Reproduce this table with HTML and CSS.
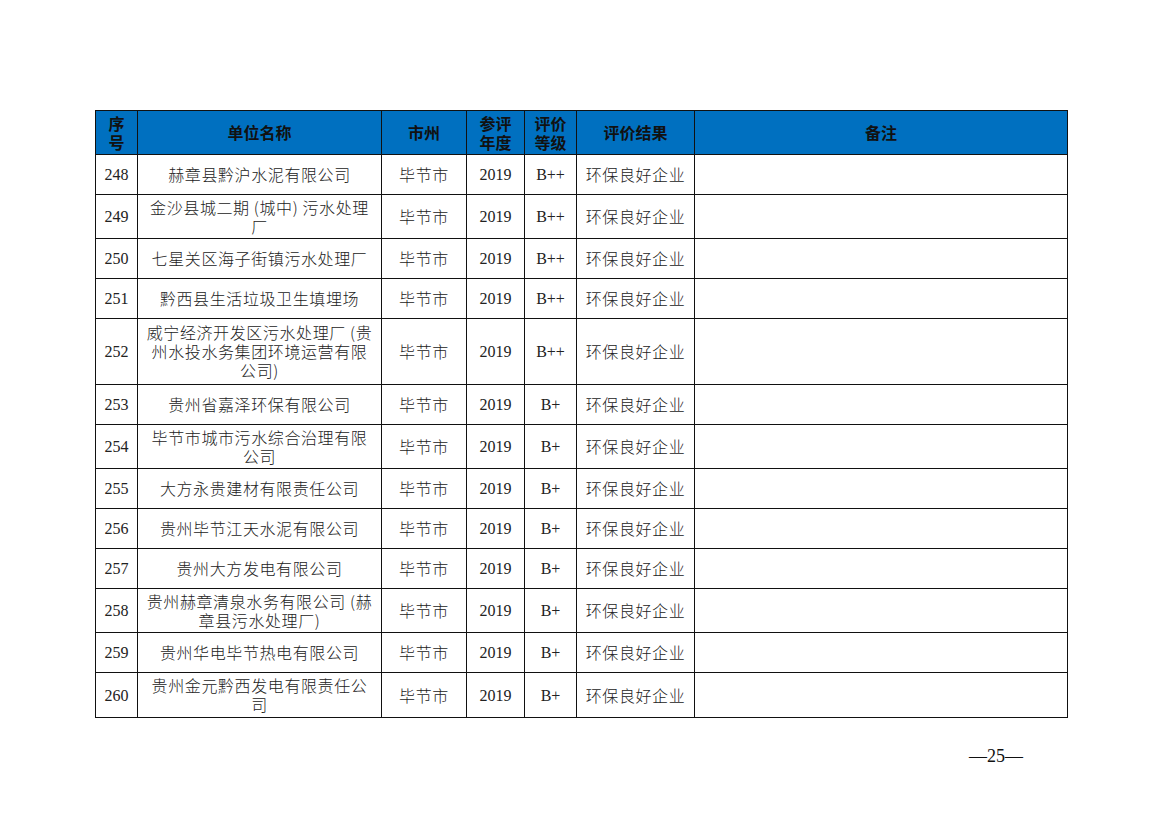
FILE: index.html
```
<!DOCTYPE html>
<html lang="zh">
<head>
<meta charset="utf-8">
<link rel="stylesheet" href="styles.css">
</head>
<body>
<div class="page">
<table class="list">
<colgroup>
<col class="c1"><col class="c2"><col class="c3"><col class="c4"><col class="c5"><col class="c6"><col class="c7">
</colgroup>
<thead>
<tr class="h">
<th>序<br>号</th><th>单位名称</th><th>市州</th><th>参评<br>年度</th><th>评价<br>等级</th><th>评价结果</th><th>备注</th>
</tr>
</thead>
<tbody>
<tr class="r40"><td class="n">248</td><td>赫章县黔沪水泥有限公司</td><td>毕节市</td><td class="n">2019</td><td class="n">B++</td><td>环保良好企业</td><td></td></tr>
<tr class="r44"><td class="n">249</td><td>金沙县城二期 (城中) 污水处理<br>厂</td><td>毕节市</td><td class="n">2019</td><td class="n">B++</td><td>环保良好企业</td><td></td></tr>
<tr class="r40"><td class="n">250</td><td>七星关区海子街镇污水处理厂</td><td>毕节市</td><td class="n">2019</td><td class="n">B++</td><td>环保良好企业</td><td></td></tr>
<tr class="r40"><td class="n">251</td><td>黔西县生活垃圾卫生填埋场</td><td>毕节市</td><td class="n">2019</td><td class="n">B++</td><td>环保良好企业</td><td></td></tr>
<tr class="r66"><td class="n">252</td><td>威宁经济开发区污水处理厂 (贵<br>州水投水务集团环境运营有限<br>公司)</td><td>毕节市</td><td class="n">2019</td><td class="n">B++</td><td>环保良好企业</td><td></td></tr>
<tr class="r40"><td class="n">253</td><td>贵州省嘉泽环保有限公司</td><td>毕节市</td><td class="n">2019</td><td class="n">B+</td><td>环保良好企业</td><td></td></tr>
<tr class="r44"><td class="n">254</td><td>毕节市城市污水综合治理有限<br>公司</td><td>毕节市</td><td class="n">2019</td><td class="n">B+</td><td>环保良好企业</td><td></td></tr>
<tr class="r40"><td class="n">255</td><td>大方永贵建材有限责任公司</td><td>毕节市</td><td class="n">2019</td><td class="n">B+</td><td>环保良好企业</td><td></td></tr>
<tr class="r40"><td class="n">256</td><td>贵州毕节江天水泥有限公司</td><td>毕节市</td><td class="n">2019</td><td class="n">B+</td><td>环保良好企业</td><td></td></tr>
<tr class="r40"><td class="n">257</td><td>贵州大方发电有限公司</td><td>毕节市</td><td class="n">2019</td><td class="n">B+</td><td>环保良好企业</td><td></td></tr>
<tr class="r44"><td class="n">258</td><td>贵州赫章清泉水务有限公司 (赫<br>章县污水处理厂)</td><td>毕节市</td><td class="n">2019</td><td class="n">B+</td><td>环保良好企业</td><td></td></tr>
<tr class="r40"><td class="n">259</td><td>贵州华电毕节热电有限公司</td><td>毕节市</td><td class="n">2019</td><td class="n">B+</td><td>环保良好企业</td><td></td></tr>
<tr class="r45"><td class="n">260</td><td>贵州金元黔西发电有限责任公<br>司</td><td>毕节市</td><td class="n">2019</td><td class="n">B+</td><td>环保良好企业</td><td></td></tr>
</tbody>
</table>
<div class="footer"><span class="pnum">—25—</span></div>
</div>
</body>
</html>
```
FILE: styles.css
```
html, body {
  margin: 0;
  padding: 0;
  background: #ffffff;
}
.page {
  width: 1169px;
  height: 826px;
  padding: 110px 0 0 95px;
  box-sizing: border-box;
}
.list {
  border-collapse: collapse;
  table-layout: fixed;
  width: 972px;
  font-family: "Liberation Serif", "Noto Sans CJK SC", serif;
  font-size: 16px;
  color: #222;
}
.c1 { width: 42px; }
.c2 { width: 244px; }
.c3 { width: 85px; }
.c4 { width: 58px; }
.c5 { width: 52px; }
.c6 { width: 118px; }
.c7 { width: 373px; }
.list th, .list td {
  border: 1px solid #111;
  padding: 0;
  text-align: center;
  vertical-align: middle;
  line-height: 19px;
}
.list th {
  background: #0070c0;
  font-family: "Noto Sans CJK SC", sans-serif;
  font-weight: bold;
  font-size: 16px;
  line-height: 19px;
  color: #111;
  height: 43px;
}
.list td {
  font-family: "Noto Sans CJK SC", sans-serif;
  font-weight: 300;
  letter-spacing: 0.6px;
}
.list td.n {
  font-family: "Liberation Serif", serif;
  font-weight: normal;
  letter-spacing: 0;
}
.r40 td { height: 39px; }
.r44 td { height: 43px; }
.r45 td { height: 44px; }
.r66 td { height: 65px; }
.footer {
  width: 928px;
  padding-top: 28px;
  text-align: right;
}
.pnum {
  font-family: "Liberation Serif", serif;
  font-size: 18px;
  color: #111;
}
```
